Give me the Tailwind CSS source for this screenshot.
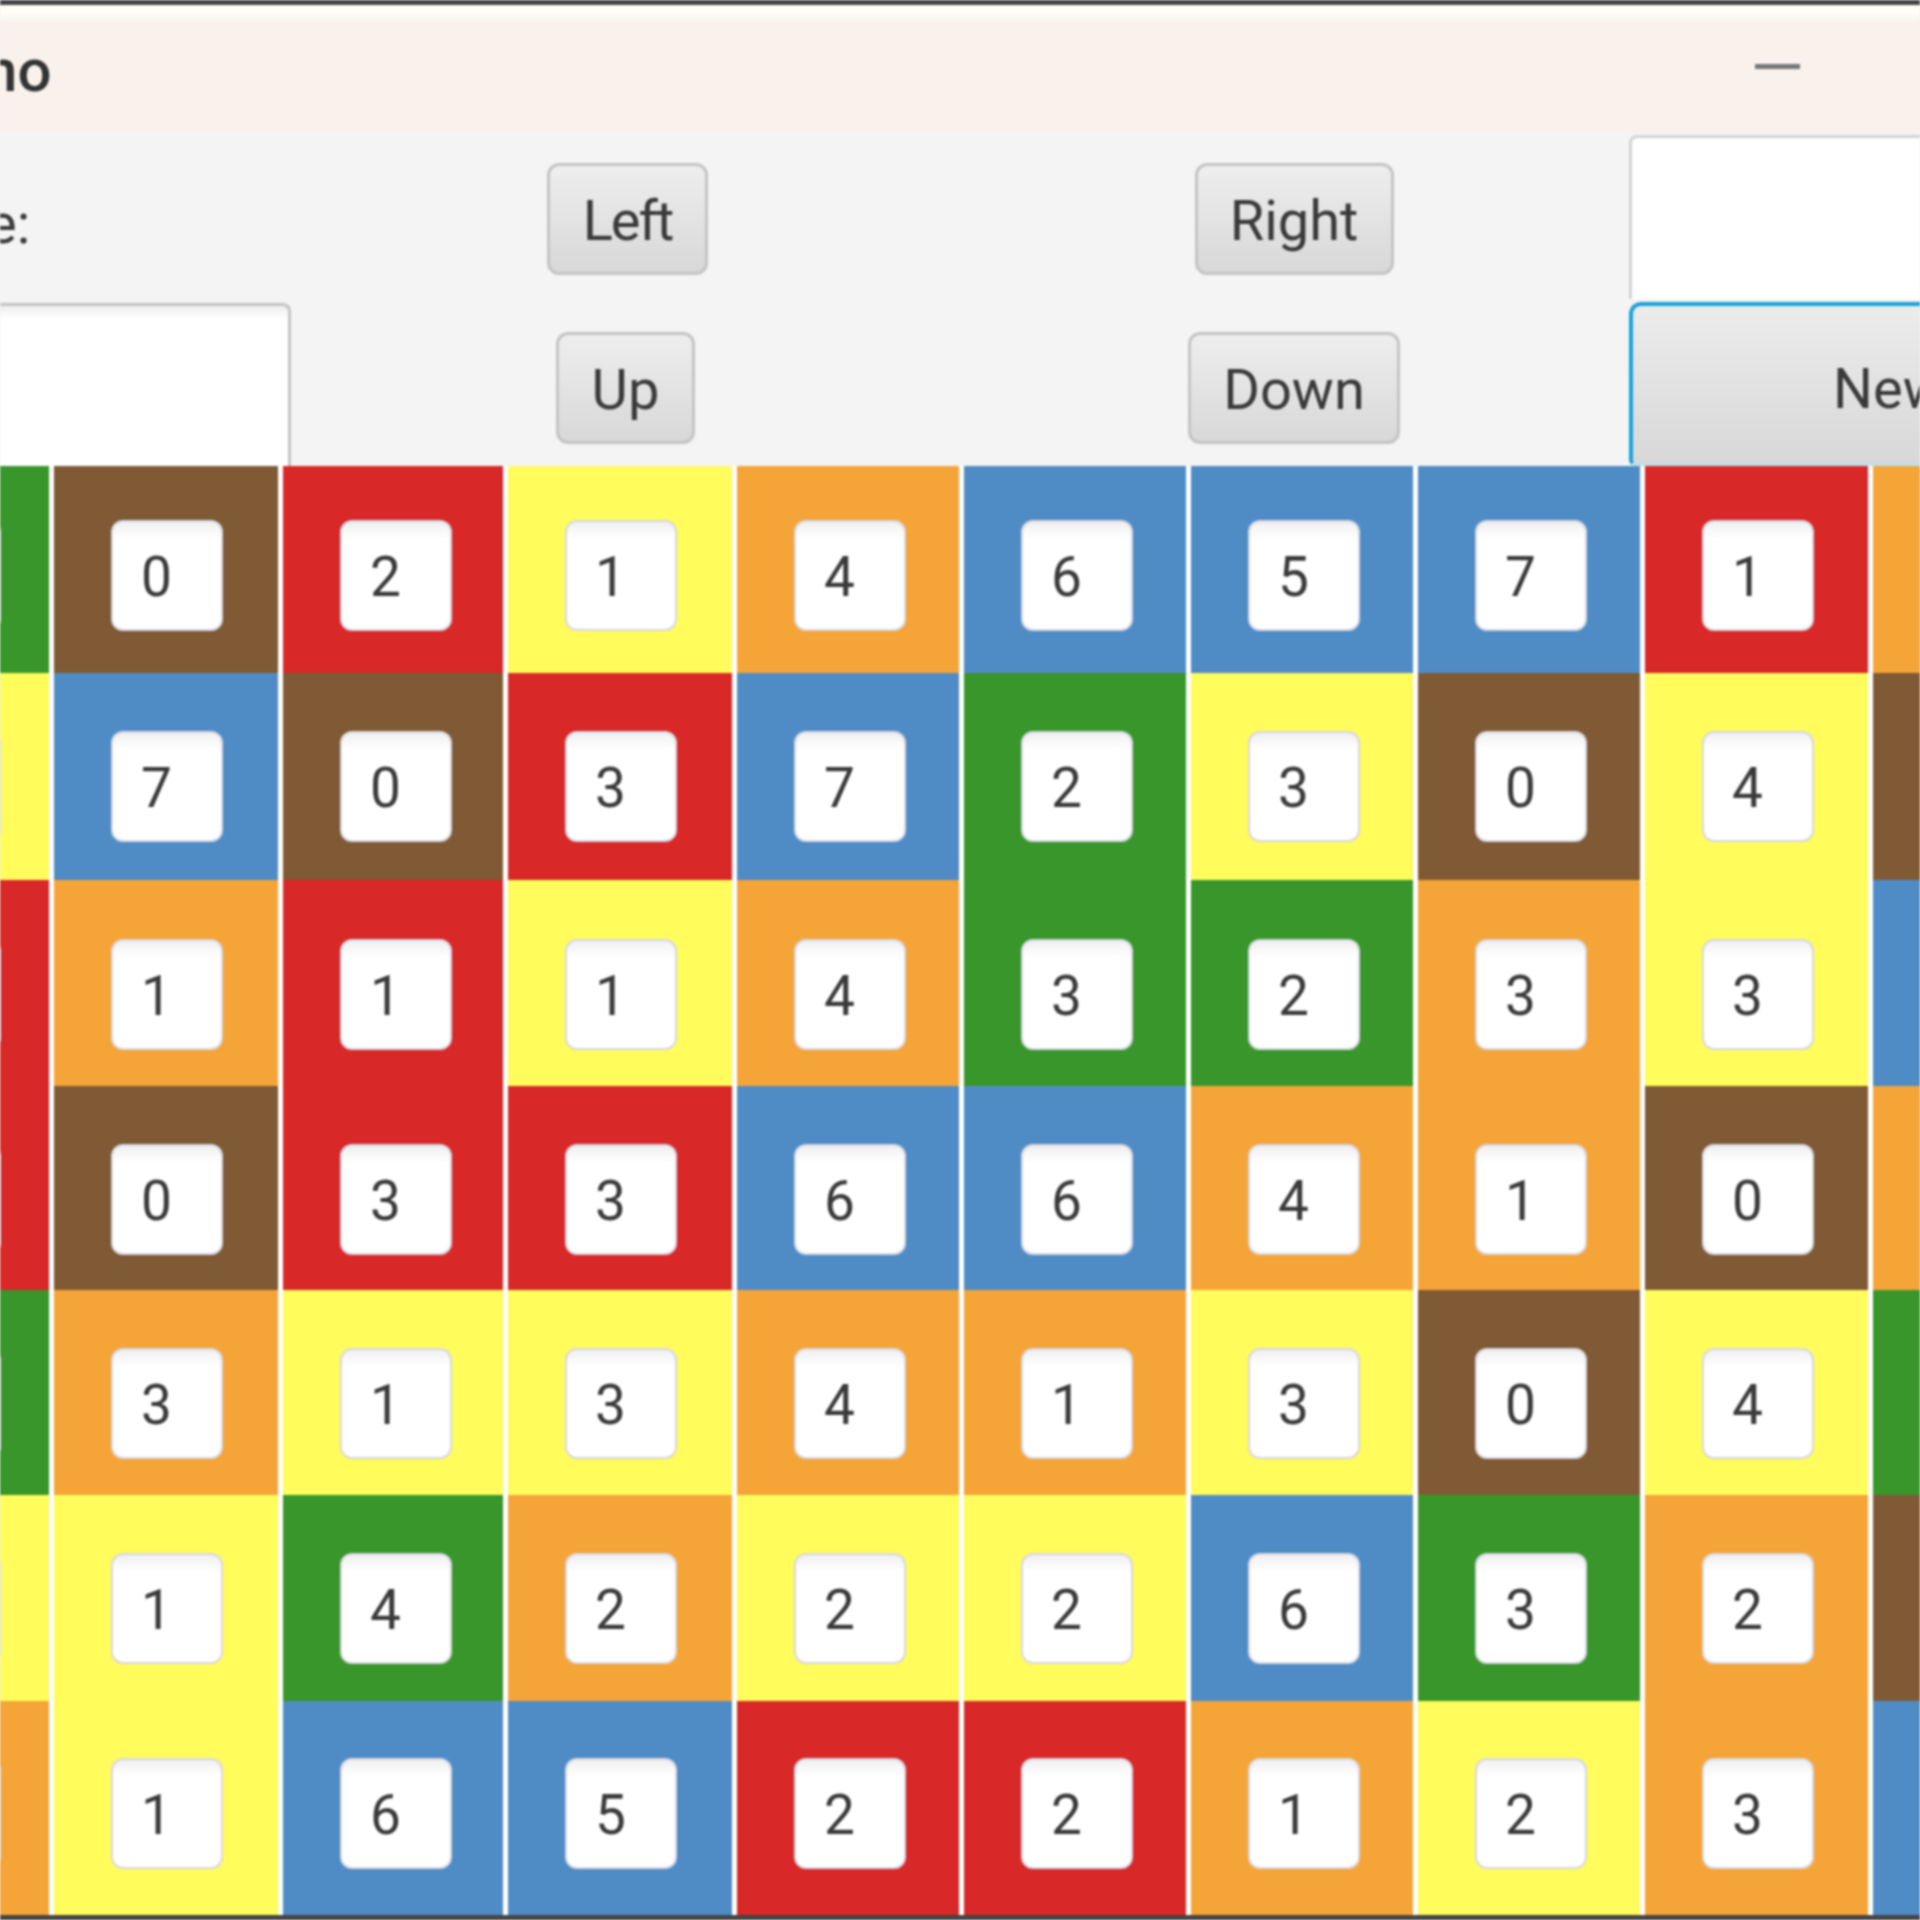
<!DOCTYPE html>
<html>
<head>
<meta charset="utf-8">
<title>Domino</title>
<script src="https://cdn.jsdelivr.net/npm/@tailwindcss/browser@4"></script>
</head>
<body class="bg-[#f4f4f4]">
<div class="w-[1920px] h-[1920px] overflow-hidden flex flex-col bg-[#f4f4f4] text-[#3a3a3a] font-['Roboto',sans-serif] blur-[0.9px]">
  <!-- Screen edge -->
  <div class="h-[5px] bg-[#444] shrink-0"></div>

  <!-- Title bar -->
  <div class="h-[128px] shrink-0 flex bg-gradient-to-b from-[#fffdf6] from-[5%] to-[#f9f1ec] to-[15%]">
    <span class="w-[39px] ml-[-16px] text-[60px] leading-none font-medium text-[#333] mt-[36px]">no</span>
    <div class="ml-[1732px] mt-[59px] w-[45px] h-[5px] bg-[#777]"></div>
  </div>

  <!-- Toolbar -->
  <div class="h-[333px] shrink-0 flex bg-[#f4f4f4]">
    <div class="w-[291px] shrink-0 flex flex-col">
      <div class="h-[170px] ml-[-13px] flex items-center text-[56px] leading-none pt-[12px]">e:</div>
      <input class="h-[163px] bg-white border-t-[3px] border-r-[3px] border-[#c4c4c4] rounded-tr-lg bg-gradient-to-b from-[#eee] from-[0%] to-white to-[8%]">
    </div>
    <div class="w-[175px] ml-[249px] shrink-0 flex flex-col items-center pt-[30px] gap-[57px]">
      <button class="w-[161px] h-[112px] pt-[4px] rounded-xl border-[3px] border-[#c4c4c4] bg-gradient-to-b from-[#eee] to-[#d8d8d8] text-[56px] tracking-[-2px]">Left</button>
      <button class="w-[139px] h-[112px] pt-[4px] mr-[4px] rounded-xl border-[3px] border-[#c4c4c4] bg-gradient-to-b from-[#eee] to-[#d8d8d8] text-[56px]">Up</button>
    </div>
    <div class="w-[228px] ml-[465px] shrink-0 flex flex-col items-center pt-[30px] gap-[57px]">
      <button class="w-[199px] h-[112px] pt-[4px] rounded-xl border-[3px] border-[#c4c4c4] bg-gradient-to-b from-[#eee] to-[#d8d8d8] text-[56px]">Right</button>
      <button class="w-[212px] h-[112px] pt-[4px] rounded-xl border-[3px] border-[#c4c4c4] bg-gradient-to-b from-[#eee] to-[#d8d8d8] text-[56px]">Down</button>
    </div>
    <div class="w-[291px] ml-[221px] shrink-0 flex flex-col pt-[2px] gap-[3px]">
      <input class="h-[165px] w-full bg-white border-l-[3px] border-t-[3px] border-[#d4d4d4] rounded-tl-lg">
      <button class="h-[164px] w-full pt-[8px] rounded-tl-xl rounded-bl-md border-l-[4px] border-t-[4px] border-b-[3px] border-l-[#1ba1d8] border-t-[#1ba1d8] border-b-[#bfe0e6] bg-gradient-to-b from-[#ececec] to-[#d8d8d8] text-[56px] text-left pl-[200px] overflow-hidden whitespace-nowrap">New</button>
    </div>
  </div>

  <!-- Board -->
  <div class="ml-[-174px] grid grid-cols-[223px_224px_220px_224px_222px_222px_222px_222px_223px_223px] gap-x-[5px] grid-rows-[207px_207px_206px_204px_205px_206px_214px] bg-white shrink-0">
    <!-- Row 1 -->
    <div class="bg-[#38962a] pt-[54px] pl-[63px]"><button class="w-[112px] h-[111px] rounded-xl border-2 border-[#d8d8e4] bg-white"></button></div>
    <div class="bg-[#7f5a34] pt-[54px] pl-[57px]"><button class="w-[112px] h-[111px] pt-[3px] rounded-xl border-2 border-[#d8d8e4] bg-gradient-to-b from-[#f0f0f0] to-white to-[15%] text-[55px] text-left pl-[28px]">0</button></div>
    <div class="bg-[#d82828] pt-[54px] pl-[57px]"><button class="w-[112px] h-[111px] pt-[3px] rounded-xl border-2 border-[#d8d8e4] bg-gradient-to-b from-[#f0f0f0] to-white to-[15%] text-[55px] text-left pl-[28px]">2</button></div>
    <div class="bg-[#fffc5c] pt-[54px] pl-[57px]"><button class="w-[112px] h-[111px] pt-[3px] rounded-xl border-2 border-[#d8d8e4] bg-gradient-to-b from-[#f0f0f0] to-white to-[15%] text-[55px] text-left pl-[28px]">1</button></div>
    <div class="bg-[#f5a438] pt-[54px] pl-[57px]"><button class="w-[112px] h-[111px] pt-[3px] rounded-xl border-2 border-[#d8d8e4] bg-gradient-to-b from-[#f0f0f0] to-white to-[15%] text-[55px] text-left pl-[28px]">4</button></div>
    <div class="bg-[#4f8cc6] pt-[54px] pl-[57px]"><button class="w-[112px] h-[111px] pt-[3px] rounded-xl border-2 border-[#d8d8e4] bg-gradient-to-b from-[#f0f0f0] to-white to-[15%] text-[55px] text-left pl-[28px]">6</button></div>
    <div class="bg-[#4f8cc6] pt-[54px] pl-[57px]"><button class="w-[112px] h-[111px] pt-[3px] rounded-xl border-2 border-[#d8d8e4] bg-gradient-to-b from-[#f0f0f0] to-white to-[15%] text-[55px] text-left pl-[28px]">5</button></div>
    <div class="bg-[#4f8cc6] pt-[54px] pl-[57px]"><button class="w-[112px] h-[111px] pt-[3px] rounded-xl border-2 border-[#d8d8e4] bg-gradient-to-b from-[#f0f0f0] to-white to-[15%] text-[55px] text-left pl-[28px]">7</button></div>
    <div class="bg-[#d82828] pt-[54px] pl-[57px]"><button class="w-[112px] h-[111px] pt-[3px] rounded-xl border-2 border-[#d8d8e4] bg-gradient-to-b from-[#f0f0f0] to-white to-[15%] text-[55px] text-left pl-[28px]">1</button></div>
    <div class="bg-[#f5a438]"></div>
    <!-- Row 2 -->
    <div class="bg-[#fffc5c] pt-[58px] pl-[63px]"><button class="w-[112px] h-[111px] rounded-xl border-2 border-[#d8d8e4] bg-white"></button></div>
    <div class="bg-[#4f8cc6] pt-[58px] pl-[57px]"><button class="w-[112px] h-[111px] pt-[3px] rounded-xl border-2 border-[#d8d8e4] bg-gradient-to-b from-[#f0f0f0] to-white to-[15%] text-[55px] text-left pl-[28px]">7</button></div>
    <div class="bg-[#7f5a34] pt-[58px] pl-[57px]"><button class="w-[112px] h-[111px] pt-[3px] rounded-xl border-2 border-[#d8d8e4] bg-gradient-to-b from-[#f0f0f0] to-white to-[15%] text-[55px] text-left pl-[28px]">0</button></div>
    <div class="bg-[#d82828] pt-[58px] pl-[57px]"><button class="w-[112px] h-[111px] pt-[3px] rounded-xl border-2 border-[#d8d8e4] bg-gradient-to-b from-[#f0f0f0] to-white to-[15%] text-[55px] text-left pl-[28px]">3</button></div>
    <div class="bg-[#4f8cc6] pt-[58px] pl-[57px]"><button class="w-[112px] h-[111px] pt-[3px] rounded-xl border-2 border-[#d8d8e4] bg-gradient-to-b from-[#f0f0f0] to-white to-[15%] text-[55px] text-left pl-[28px]">7</button></div>
    <div class="bg-[#38962a] pt-[58px] pl-[57px]"><button class="w-[112px] h-[111px] pt-[3px] rounded-xl border-2 border-[#d8d8e4] bg-gradient-to-b from-[#f0f0f0] to-white to-[15%] text-[55px] text-left pl-[28px]">2</button></div>
    <div class="bg-[#fffc5c] pt-[58px] pl-[57px]"><button class="w-[112px] h-[111px] pt-[3px] rounded-xl border-2 border-[#d8d8e4] bg-gradient-to-b from-[#f0f0f0] to-white to-[15%] text-[55px] text-left pl-[28px]">3</button></div>
    <div class="bg-[#7f5a34] pt-[58px] pl-[57px]"><button class="w-[112px] h-[111px] pt-[3px] rounded-xl border-2 border-[#d8d8e4] bg-gradient-to-b from-[#f0f0f0] to-white to-[15%] text-[55px] text-left pl-[28px]">0</button></div>
    <div class="bg-[#fffc5c] pt-[58px] pl-[57px]"><button class="w-[112px] h-[111px] pt-[3px] rounded-xl border-2 border-[#d8d8e4] bg-gradient-to-b from-[#f0f0f0] to-white to-[15%] text-[55px] text-left pl-[28px]">4</button></div>
    <div class="bg-[#7f5a34]"></div>
    <!-- Row 3 -->
    <div class="bg-[#d82828] pt-[59px] pl-[63px]"><button class="w-[112px] h-[111px] rounded-xl border-2 border-[#d8d8e4] bg-white"></button></div>
    <div class="bg-[#f5a438] pt-[59px] pl-[57px]"><button class="w-[112px] h-[111px] pt-[3px] rounded-xl border-2 border-[#d8d8e4] bg-gradient-to-b from-[#f0f0f0] to-white to-[15%] text-[55px] text-left pl-[28px]">1</button></div>
    <div class="bg-[#d82828] pt-[59px] pl-[57px]"><button class="w-[112px] h-[111px] pt-[3px] rounded-xl border-2 border-[#d8d8e4] bg-gradient-to-b from-[#f0f0f0] to-white to-[15%] text-[55px] text-left pl-[28px]">1</button></div>
    <div class="bg-[#fffc5c] pt-[59px] pl-[57px]"><button class="w-[112px] h-[111px] pt-[3px] rounded-xl border-2 border-[#d8d8e4] bg-gradient-to-b from-[#f0f0f0] to-white to-[15%] text-[55px] text-left pl-[28px]">1</button></div>
    <div class="bg-[#f5a438] pt-[59px] pl-[57px]"><button class="w-[112px] h-[111px] pt-[3px] rounded-xl border-2 border-[#d8d8e4] bg-gradient-to-b from-[#f0f0f0] to-white to-[15%] text-[55px] text-left pl-[28px]">4</button></div>
    <div class="bg-[#38962a] pt-[59px] pl-[57px]"><button class="w-[112px] h-[111px] pt-[3px] rounded-xl border-2 border-[#d8d8e4] bg-gradient-to-b from-[#f0f0f0] to-white to-[15%] text-[55px] text-left pl-[28px]">3</button></div>
    <div class="bg-[#38962a] pt-[59px] pl-[57px]"><button class="w-[112px] h-[111px] pt-[3px] rounded-xl border-2 border-[#d8d8e4] bg-gradient-to-b from-[#f0f0f0] to-white to-[15%] text-[55px] text-left pl-[28px]">2</button></div>
    <div class="bg-[#f5a438] pt-[59px] pl-[57px]"><button class="w-[112px] h-[111px] pt-[3px] rounded-xl border-2 border-[#d8d8e4] bg-gradient-to-b from-[#f0f0f0] to-white to-[15%] text-[55px] text-left pl-[28px]">3</button></div>
    <div class="bg-[#fffc5c] pt-[59px] pl-[57px]"><button class="w-[112px] h-[111px] pt-[3px] rounded-xl border-2 border-[#d8d8e4] bg-gradient-to-b from-[#f0f0f0] to-white to-[15%] text-[55px] text-left pl-[28px]">3</button></div>
    <div class="bg-[#4f8cc6]"></div>
    <!-- Row 4 -->
    <div class="bg-[#d82828] pt-[58px] pl-[63px]"><button class="w-[112px] h-[111px] rounded-xl border-2 border-[#d8d8e4] bg-white"></button></div>
    <div class="bg-[#7f5a34] pt-[58px] pl-[57px]"><button class="w-[112px] h-[111px] pt-[3px] rounded-xl border-2 border-[#d8d8e4] bg-gradient-to-b from-[#f0f0f0] to-white to-[15%] text-[55px] text-left pl-[28px]">0</button></div>
    <div class="bg-[#d82828] pt-[58px] pl-[57px]"><button class="w-[112px] h-[111px] pt-[3px] rounded-xl border-2 border-[#d8d8e4] bg-gradient-to-b from-[#f0f0f0] to-white to-[15%] text-[55px] text-left pl-[28px]">3</button></div>
    <div class="bg-[#d82828] pt-[58px] pl-[57px]"><button class="w-[112px] h-[111px] pt-[3px] rounded-xl border-2 border-[#d8d8e4] bg-gradient-to-b from-[#f0f0f0] to-white to-[15%] text-[55px] text-left pl-[28px]">3</button></div>
    <div class="bg-[#4f8cc6] pt-[58px] pl-[57px]"><button class="w-[112px] h-[111px] pt-[3px] rounded-xl border-2 border-[#d8d8e4] bg-gradient-to-b from-[#f0f0f0] to-white to-[15%] text-[55px] text-left pl-[28px]">6</button></div>
    <div class="bg-[#4f8cc6] pt-[58px] pl-[57px]"><button class="w-[112px] h-[111px] pt-[3px] rounded-xl border-2 border-[#d8d8e4] bg-gradient-to-b from-[#f0f0f0] to-white to-[15%] text-[55px] text-left pl-[28px]">6</button></div>
    <div class="bg-[#f5a438] pt-[58px] pl-[57px]"><button class="w-[112px] h-[111px] pt-[3px] rounded-xl border-2 border-[#d8d8e4] bg-gradient-to-b from-[#f0f0f0] to-white to-[15%] text-[55px] text-left pl-[28px]">4</button></div>
    <div class="bg-[#f5a438] pt-[58px] pl-[57px]"><button class="w-[112px] h-[111px] pt-[3px] rounded-xl border-2 border-[#d8d8e4] bg-gradient-to-b from-[#f0f0f0] to-white to-[15%] text-[55px] text-left pl-[28px]">1</button></div>
    <div class="bg-[#7f5a34] pt-[58px] pl-[57px]"><button class="w-[112px] h-[111px] pt-[3px] rounded-xl border-2 border-[#d8d8e4] bg-gradient-to-b from-[#f0f0f0] to-white to-[15%] text-[55px] text-left pl-[28px]">0</button></div>
    <div class="bg-[#f5a438]"></div>
    <!-- Row 5 -->
    <div class="bg-[#38962a] pt-[58px] pl-[63px]"><button class="w-[112px] h-[111px] rounded-xl border-2 border-[#d8d8e4] bg-white"></button></div>
    <div class="bg-[#f5a438] pt-[58px] pl-[57px]"><button class="w-[112px] h-[111px] pt-[3px] rounded-xl border-2 border-[#d8d8e4] bg-gradient-to-b from-[#f0f0f0] to-white to-[15%] text-[55px] text-left pl-[28px]">3</button></div>
    <div class="bg-[#fffc5c] pt-[58px] pl-[57px]"><button class="w-[112px] h-[111px] pt-[3px] rounded-xl border-2 border-[#d8d8e4] bg-gradient-to-b from-[#f0f0f0] to-white to-[15%] text-[55px] text-left pl-[28px]">1</button></div>
    <div class="bg-[#fffc5c] pt-[58px] pl-[57px]"><button class="w-[112px] h-[111px] pt-[3px] rounded-xl border-2 border-[#d8d8e4] bg-gradient-to-b from-[#f0f0f0] to-white to-[15%] text-[55px] text-left pl-[28px]">3</button></div>
    <div class="bg-[#f5a438] pt-[58px] pl-[57px]"><button class="w-[112px] h-[111px] pt-[3px] rounded-xl border-2 border-[#d8d8e4] bg-gradient-to-b from-[#f0f0f0] to-white to-[15%] text-[55px] text-left pl-[28px]">4</button></div>
    <div class="bg-[#f5a438] pt-[58px] pl-[57px]"><button class="w-[112px] h-[111px] pt-[3px] rounded-xl border-2 border-[#d8d8e4] bg-gradient-to-b from-[#f0f0f0] to-white to-[15%] text-[55px] text-left pl-[28px]">1</button></div>
    <div class="bg-[#fffc5c] pt-[58px] pl-[57px]"><button class="w-[112px] h-[111px] pt-[3px] rounded-xl border-2 border-[#d8d8e4] bg-gradient-to-b from-[#f0f0f0] to-white to-[15%] text-[55px] text-left pl-[28px]">3</button></div>
    <div class="bg-[#7f5a34] pt-[58px] pl-[57px]"><button class="w-[112px] h-[111px] pt-[3px] rounded-xl border-2 border-[#d8d8e4] bg-gradient-to-b from-[#f0f0f0] to-white to-[15%] text-[55px] text-left pl-[28px]">0</button></div>
    <div class="bg-[#fffc5c] pt-[58px] pl-[57px]"><button class="w-[112px] h-[111px] pt-[3px] rounded-xl border-2 border-[#d8d8e4] bg-gradient-to-b from-[#f0f0f0] to-white to-[15%] text-[55px] text-left pl-[28px]">4</button></div>
    <div class="bg-[#38962a]"></div>
    <!-- Row 6 -->
    <div class="bg-[#fffc5c] pt-[58px] pl-[63px]"><button class="w-[112px] h-[111px] rounded-xl border-2 border-[#d8d8e4] bg-white"></button></div>
    <div class="bg-[#fffc5c] pt-[58px] pl-[57px]"><button class="w-[112px] h-[111px] pt-[3px] rounded-xl border-2 border-[#d8d8e4] bg-gradient-to-b from-[#f0f0f0] to-white to-[15%] text-[55px] text-left pl-[28px]">1</button></div>
    <div class="bg-[#38962a] pt-[58px] pl-[57px]"><button class="w-[112px] h-[111px] pt-[3px] rounded-xl border-2 border-[#d8d8e4] bg-gradient-to-b from-[#f0f0f0] to-white to-[15%] text-[55px] text-left pl-[28px]">4</button></div>
    <div class="bg-[#f5a438] pt-[58px] pl-[57px]"><button class="w-[112px] h-[111px] pt-[3px] rounded-xl border-2 border-[#d8d8e4] bg-gradient-to-b from-[#f0f0f0] to-white to-[15%] text-[55px] text-left pl-[28px]">2</button></div>
    <div class="bg-[#fffc5c] pt-[58px] pl-[57px]"><button class="w-[112px] h-[111px] pt-[3px] rounded-xl border-2 border-[#d8d8e4] bg-gradient-to-b from-[#f0f0f0] to-white to-[15%] text-[55px] text-left pl-[28px]">2</button></div>
    <div class="bg-[#fffc5c] pt-[58px] pl-[57px]"><button class="w-[112px] h-[111px] pt-[3px] rounded-xl border-2 border-[#d8d8e4] bg-gradient-to-b from-[#f0f0f0] to-white to-[15%] text-[55px] text-left pl-[28px]">2</button></div>
    <div class="bg-[#4f8cc6] pt-[58px] pl-[57px]"><button class="w-[112px] h-[111px] pt-[3px] rounded-xl border-2 border-[#d8d8e4] bg-gradient-to-b from-[#f0f0f0] to-white to-[15%] text-[55px] text-left pl-[28px]">6</button></div>
    <div class="bg-[#38962a] pt-[58px] pl-[57px]"><button class="w-[112px] h-[111px] pt-[3px] rounded-xl border-2 border-[#d8d8e4] bg-gradient-to-b from-[#f0f0f0] to-white to-[15%] text-[55px] text-left pl-[28px]">3</button></div>
    <div class="bg-[#f5a438] pt-[58px] pl-[57px]"><button class="w-[112px] h-[111px] pt-[3px] rounded-xl border-2 border-[#d8d8e4] bg-gradient-to-b from-[#f0f0f0] to-white to-[15%] text-[55px] text-left pl-[28px]">2</button></div>
    <div class="bg-[#7f5a34]"></div>
    <!-- Row 7 -->
    <div class="bg-[#f5a438] pt-[57px] pl-[63px]"><button class="w-[112px] h-[111px] rounded-xl border-2 border-[#d8d8e4] bg-white"></button></div>
    <div class="bg-[#fffc5c] pt-[57px] pl-[57px]"><button class="w-[112px] h-[111px] pt-[3px] rounded-xl border-2 border-[#d8d8e4] bg-gradient-to-b from-[#f0f0f0] to-white to-[15%] text-[55px] text-left pl-[28px]">1</button></div>
    <div class="bg-[#4f8cc6] pt-[57px] pl-[57px]"><button class="w-[112px] h-[111px] pt-[3px] rounded-xl border-2 border-[#d8d8e4] bg-gradient-to-b from-[#f0f0f0] to-white to-[15%] text-[55px] text-left pl-[28px]">6</button></div>
    <div class="bg-[#4f8cc6] pt-[57px] pl-[57px]"><button class="w-[112px] h-[111px] pt-[3px] rounded-xl border-2 border-[#d8d8e4] bg-gradient-to-b from-[#f0f0f0] to-white to-[15%] text-[55px] text-left pl-[28px]">5</button></div>
    <div class="bg-[#d82828] pt-[57px] pl-[57px]"><button class="w-[112px] h-[111px] pt-[3px] rounded-xl border-2 border-[#d8d8e4] bg-gradient-to-b from-[#f0f0f0] to-white to-[15%] text-[55px] text-left pl-[28px]">2</button></div>
    <div class="bg-[#d82828] pt-[57px] pl-[57px]"><button class="w-[112px] h-[111px] pt-[3px] rounded-xl border-2 border-[#d8d8e4] bg-gradient-to-b from-[#f0f0f0] to-white to-[15%] text-[55px] text-left pl-[28px]">2</button></div>
    <div class="bg-[#f5a438] pt-[57px] pl-[57px]"><button class="w-[112px] h-[111px] pt-[3px] rounded-xl border-2 border-[#d8d8e4] bg-gradient-to-b from-[#f0f0f0] to-white to-[15%] text-[55px] text-left pl-[28px]">1</button></div>
    <div class="bg-[#fffc5c] pt-[57px] pl-[57px]"><button class="w-[112px] h-[111px] pt-[3px] rounded-xl border-2 border-[#d8d8e4] bg-gradient-to-b from-[#f0f0f0] to-white to-[15%] text-[55px] text-left pl-[28px]">2</button></div>
    <div class="bg-[#f5a438] pt-[57px] pl-[57px]"><button class="w-[112px] h-[111px] pt-[3px] rounded-xl border-2 border-[#d8d8e4] bg-gradient-to-b from-[#f0f0f0] to-white to-[15%] text-[55px] text-left pl-[28px]">3</button></div>
    <div class="bg-[#4f8cc6]"></div>
  </div>

  <!-- Screen edge -->
  <div class="h-[6px] bg-[#444] shrink-0"></div>
</div>
</body>
</html>
